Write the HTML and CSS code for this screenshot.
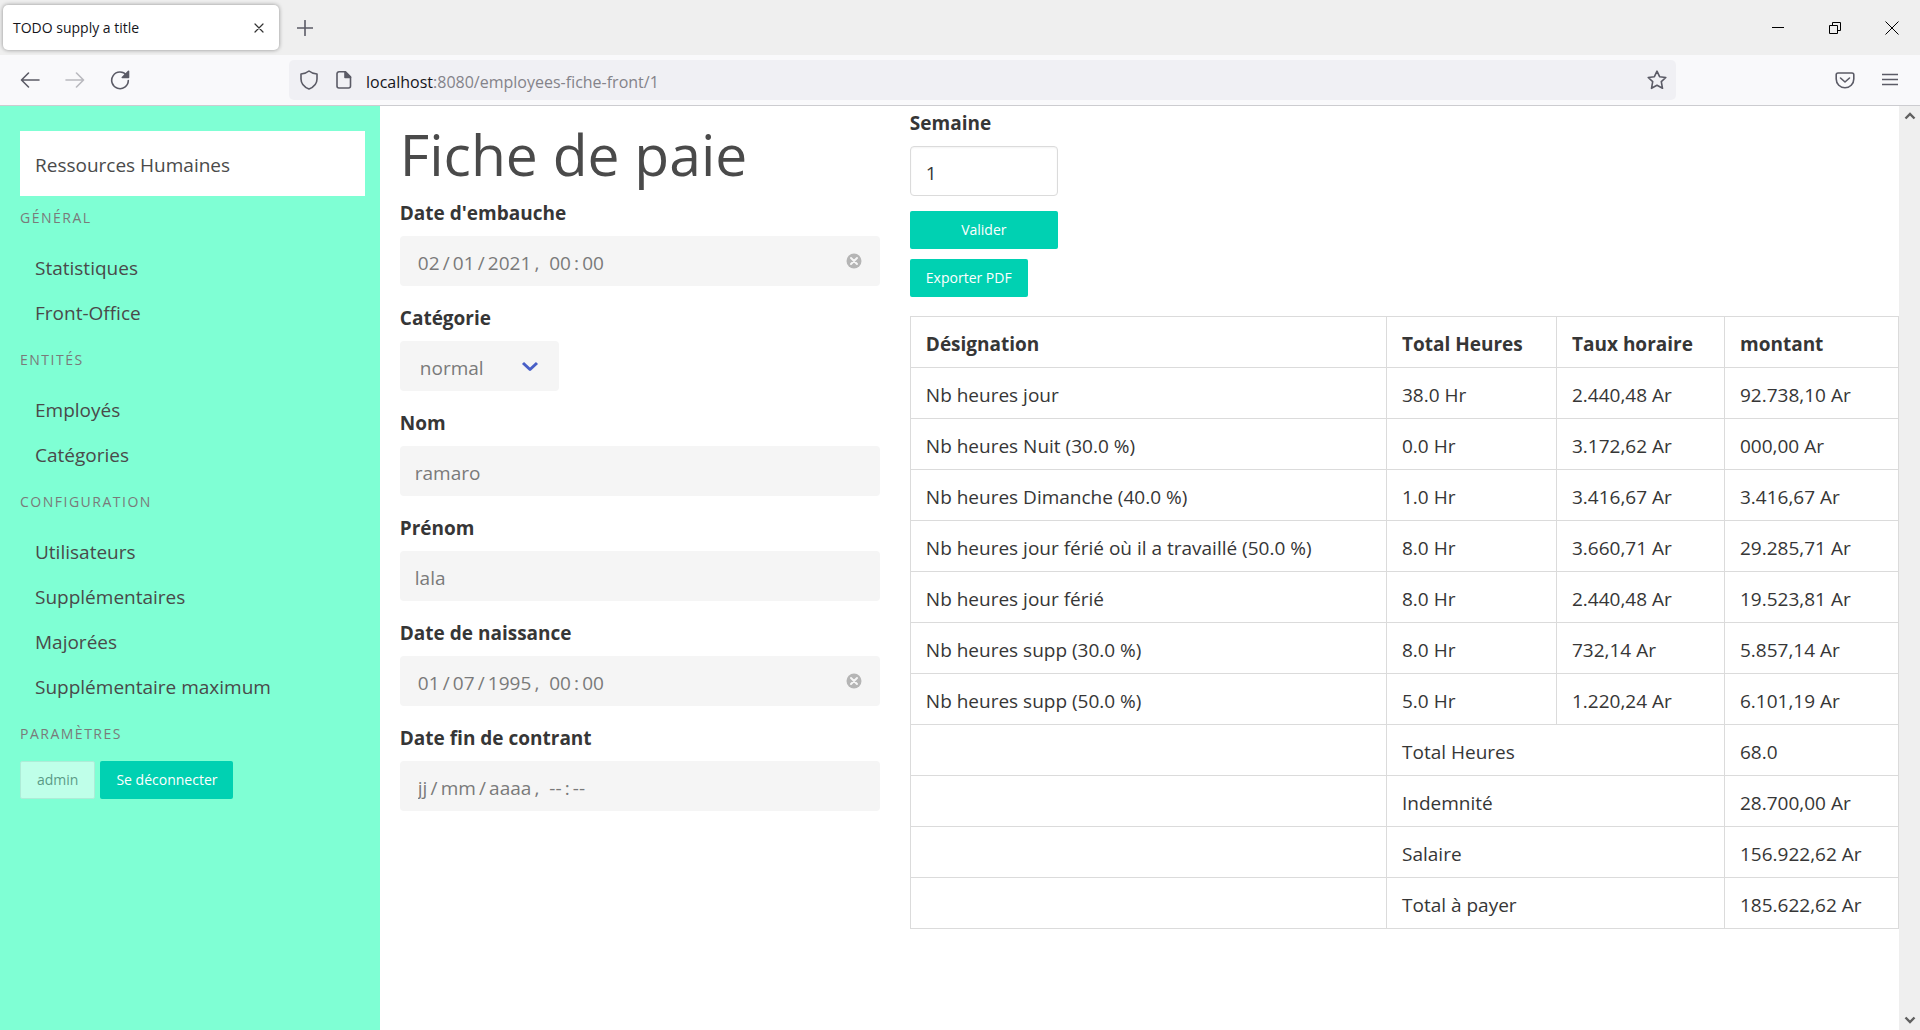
FILE: index.html
```html
<!DOCTYPE html>
<html lang="fr">
<head>
<meta charset="utf-8">
<title>TODO supply a title</title>
<link rel="stylesheet" href="styles.css">
</head>
<body>
<div class="window">
  <header class="tab-bar">
    <div class="tab">
      <span class="tab-title">TODO supply a title</span>
      <button class="icon-button tab-close" type="button" aria-label="Fermer l'onglet"><svg width="10" height="10" viewBox="0 0 10 10"><path d="M1 1l8 8M9 1l-8 8"/></svg></button>
    </div>
    <button class="icon-button new-tab" type="button" aria-label="Nouvel onglet"><svg width="16" height="16" viewBox="0 0 16 16"><path d="M8 .5v15M.5 8h15"/></svg></button>
    <div class="window-controls">
      <button class="icon-button window-control" type="button" aria-label="Réduire"><svg width="14" height="14" viewBox="0 0 14 14"><path d="M1 6.500h12"/></svg></button>
      <button class="icon-button window-control" type="button" aria-label="Restaurer"><svg width="14" height="14" viewBox="0 0 14 14"><path d="M1.500 4.500h8v8h-8zM4.500 4.500v-3h8v8h-3"/></svg></button>
      <button class="icon-button window-control" type="button" aria-label="Fermer"><svg width="14" height="14" viewBox="0 0 14 14"><path d="M.5.5l13 13M13.500.5l-13 13"/></svg></button>
    </div>
  </header>

  <div class="nav-bar">
    <div class="nav-buttons">
      <button class="icon-button nav-button" type="button" aria-label="Précédent"><svg width="20" height="20" viewBox="0 0 20 20"><path d="M19 10H2M8.500 3L1.500 10l7 7"/></svg></button>
      <button class="icon-button nav-button" type="button" aria-label="Suivant" disabled><svg width="20" height="20" viewBox="0 0 20 20"><path d="M1 10h17M11.500 3l7 7-7 7"/></svg></button>
      <button class="icon-button nav-button" type="button" aria-label="Actualiser"><svg width="20" height="20" viewBox="0 0 20 20"><path d="M16.500 5.200A8.300 8.300 0 1 0 18.300 10.500"/><path class="filled" d="M18.500 1.300v6.200h-6.200z"/></svg></button>
    </div>
    <div class="address">
      <svg width="20" height="20" viewBox="0 0 20 20"><path d="M10 1C8 2.800 5 3.700 2 4v5c0 4.500 3 8 8 10 5-2 8-5.500 8-10V4c-3-.3-6-1.200-8-3z"/></svg>
      <svg class="address-page" width="20" height="20" viewBox="0 0 20 20"><path d="M5 1.800h6.500l5 5V16a2 2 0 0 1-2 2H5a2 2 0 0 1-2-2V3.800a2 2 0 0 1 2-2z"/><path class="filled" d="M11 2v5.500h5.500z"/></svg>
      <span class="address-text"><b class="address-host">localhost</b>:8080/employees-fiche-front/1</span>
      <svg width="20" height="20" viewBox="0 0 20 20"><path d="M10 1.200l2.600 5.500 6.200.8-4.500 4.200 1.200 6.600-5.500-3.100-5.500 3.100 1.200-6.600L1.200 7.500l6.200-.8z"/></svg>
    </div>
    <div class="nav-tools">
      <button class="icon-button nav-button" type="button" aria-label="Pocket"><svg width="20" height="20" viewBox="0 0 20 20"><path d="M3 3h14a1.800 1.800 0 0 1 1.800 1.800V9A8.800 8.800 0 0 1 1.200 9V4.800A1.800 1.800 0 0 1 3 3z"/><path d="M5.500 8L10 12l4.500-4"/></svg></button>
      <button class="icon-button nav-button" type="button" aria-label="Menu"><svg width="16" height="20" viewBox="0 0 16 20"><path d="M.5 4.500h15M.5 9.500h15M.5 14.500h15"/></svg></button>
    </div>
  </div>

  <div class="viewport">
    <div class="page">
      <aside class="sidebar">
        <a class="brand" href="#">Ressources Humaines</a>
        <nav class="menu">
          <p class="menu-label">Général</p>
          <ul class="menu-list">
            <li><a href="#">Statistiques</a></li>
            <li><a href="#">Front-Office</a></li>
          </ul>
          <p class="menu-label">Entités</p>
          <ul class="menu-list">
            <li><a href="#">Employés</a></li>
            <li><a href="#">Catégories</a></li>
          </ul>
          <p class="menu-label">Configuration</p>
          <ul class="menu-list">
            <li><a href="#">Utilisateurs</a></li>
            <li><a href="#">Supplémentaires</a></li>
            <li><a href="#">Majorées</a></li>
            <li><a href="#">Supplémentaire maximum</a></li>
          </ul>
          <p class="menu-label">Paramètres</p>
        </nav>
        <div class="session">
          <button class="button button-light" type="button" disabled>admin</button>
          <button class="button" type="button">Se déconnecter</button>
        </div>
      </aside>

      <main class="content">
        <form class="employee">
          <h1 class="title">Fiche de paie</h1>
          <div class="field">
            <label class="label" for="embauche">Date d'embauche</label>
            <div class="control">
              <input class="input input-date" id="embauche" type="text" value="02&#8201;/&#8201;01&#8201;/&#8201;2021&#8201;,&nbsp; 00&#8201;:&#8201;00" readonly>
              <button class="icon-button clear" type="button" aria-label="Effacer"><svg width="16" height="16" viewBox="0 0 16 16"><circle cx="8" cy="8" r="7.500"/><path d="M5 5l6 6M11 5l-6 6"/></svg></button>
            </div>
          </div>
          <div class="field">
            <label class="label" for="categorie">Catégorie</label>
            <div class="control control-select">
              <select class="input select" id="categorie"><option>normal</option></select>
              <svg class="chevron" width="18" height="12" viewBox="0 0 18 12"><path d="M2 2l7 6.500L16 2"/></svg>
            </div>
          </div>
          <div class="field">
            <label class="label" for="nom">Nom</label>
            <input class="input" id="nom" type="text" value="ramaro" readonly>
          </div>
          <div class="field">
            <label class="label" for="prenom">Prénom</label>
            <input class="input" id="prenom" type="text" value="lala" readonly>
          </div>
          <div class="field">
            <label class="label" for="naissance">Date de naissance</label>
            <div class="control">
              <input class="input input-date" id="naissance" type="text" value="01&#8201;/&#8201;07&#8201;/&#8201;1995&#8201;,&nbsp; 00&#8201;:&#8201;00" readonly>
              <button class="icon-button clear" type="button" aria-label="Effacer"><svg width="16" height="16" viewBox="0 0 16 16"><circle cx="8" cy="8" r="7.500"/><path d="M5 5l6 6M11 5l-6 6"/></svg></button>
            </div>
          </div>
          <div class="field">
            <label class="label" for="fin">Date fin de contrant</label>
            <input class="input input-date" id="fin" type="text" placeholder="jj&#8201;/&#8201;mm&#8201;/&#8201;aaaa&#8201;,&nbsp; --&#8201;:&#8201;--" readonly>
          </div>
        </form>

        <section class="payslip">
          <form class="week">
            <label class="label" for="semaine">Semaine</label>
            <input class="input input-week" id="semaine" type="text" inputmode="numeric" value="1">
            <button class="button" type="button">Valider</button>
          </form>
          <button class="button" type="button">Exporter PDF</button>
          <table class="table">
            <colgroup><col><col class="col-hours"><col class="col-rate"><col class="col-amount"></colgroup>
            <thead>
              <tr><th>Désignation</th><th>Total Heures</th><th>Taux horaire</th><th>montant</th></tr>
            </thead>
            <tbody>
              <tr><td>Nb heures jour</td><td>38.0 Hr</td><td>2.440,48 Ar</td><td>92.738,10 Ar</td></tr>
              <tr><td>Nb heures Nuit (30.0 %)</td><td>0.0 Hr</td><td>3.172,62 Ar</td><td>000,00 Ar</td></tr>
              <tr><td>Nb heures Dimanche (40.0 %)</td><td>1.0 Hr</td><td>3.416,67 Ar</td><td>3.416,67 Ar</td></tr>
              <tr><td>Nb heures jour férié où il a travaillé (50.0 %)</td><td>8.0 Hr</td><td>3.660,71 Ar</td><td>29.285,71 Ar</td></tr>
              <tr><td>Nb heures jour férié</td><td>8.0 Hr</td><td>2.440,48 Ar</td><td>19.523,81 Ar</td></tr>
              <tr><td>Nb heures supp (30.0 %)</td><td>8.0 Hr</td><td>732,14 Ar</td><td>5.857,14 Ar</td></tr>
              <tr><td>Nb heures supp (50.0 %)</td><td>5.0 Hr</td><td>1.220,24 Ar</td><td>6.101,19 Ar</td></tr>
              <tr><td></td><td colspan="2">Total Heures</td><td>68.0</td></tr>
              <tr><td></td><td colspan="2">Indemnité</td><td>28.700,00 Ar</td></tr>
              <tr><td></td><td colspan="2">Salaire</td><td>156.922,62 Ar</td></tr>
              <tr><td></td><td colspan="2">Total à payer</td><td>185.622,62 Ar</td></tr>
            </tbody>
          </table>
        </section>
      </main>
    </div>

    <div class="scroll-track">
      <svg width="12" height="10" viewBox="0 0 12 10"><path d="M1.500 7.500L6 3l4.500 4.500"/></svg>
      <svg width="12" height="10" viewBox="0 0 12 10"><path d="M1.500 2.500L6 7l4.500-4.500"/></svg>
    </div>
  </div>
</div>
</body>
</html>
```
FILE: styles.css
```css
* {
  box-sizing: border-box;
}

body {
  margin: 0;
  color: #363636;
  background: #fff;
  font: 19px/30px "Open Sans", "Noto Sans", sans-serif;
}

button,
input,
select {
  font: inherit;
  margin: 0;
}

svg {
  display: block;
  flex: none;
  fill: none;
  stroke: #5b5b66;
  stroke-width: 1.6;
  stroke-linecap: round;
  stroke-linejoin: round;
}

.filled {
  fill: #5b5b66;
}

.icon-button {
  display: flex;
  align-items: center;
  justify-content: center;
  padding: 0;
  border: 0;
  background: none;
}

.window {
  display: flex;
  flex-direction: column;
  min-height: 100vh;
}

/* Browser frame */

.tab-bar {
  display: flex;
  align-items: center;
  height: 55px;
  padding-left: 3px;
  background: #efefef;
}

.tab {
  display: flex;
  align-items: center;
  width: 276px;
  height: 45px;
  padding: 0 10px;
  border-radius: 5px;
  background: #fff;
  box-shadow: 0 0 4px rgba(0, 0, 0, 0.4);
}

.tab-title {
  flex: 1;
  color: #15141a;
  font-size: 14px;
}

.tab-close {
  width: 20px;
  height: 20px;
}

.tab-close svg {
  stroke: #333;
  stroke-width: 1.2;
}

.new-tab {
  width: 52px;
  height: 45px;
}

.window-controls {
  display: flex;
  margin-left: auto;
}

.window-control {
  width: 57px;
  height: 55px;
}

.window-control svg {
  stroke: #000;
  stroke-width: 1;
  stroke-linecap: butt;
  stroke-linejoin: miter;
}

.nav-bar {
  display: flex;
  align-items: center;
  height: 51px;
  border-bottom: 1px solid #ccccd0;
  background: #f9f9fb;
}

.nav-buttons {
  display: flex;
  width: 289px;
  padding-left: 7px;
}

.nav-button {
  width: 45px;
  height: 40px;
}

.nav-button:disabled {
  opacity: 0.4;
}

.address {
  display: flex;
  flex: 1;
  align-items: center;
  height: 40px;
  padding: 0 9px 0 10px;
  border-radius: 5px;
  background: #f0f0f4;
}

.address-page {
  margin: 0 12px 0 15px;
}

.address-text {
  flex: 1;
  padding-top: 3px;
  color: #84838a;
  font-size: 16px;
}

.address-host {
  color: #15141a;
  font-weight: 400;
}

.nav-tools {
  display: flex;
  width: 244px;
  padding-right: 8px;
  justify-content: flex-end;
}

.viewport {
  display: flex;
  flex: 1;
}

.scroll-track {
  display: flex;
  flex-direction: column;
  flex: none;
  align-items: center;
  justify-content: space-between;
  width: 21px;
  padding: 5px 0;
  background: #efefef;
}

.scroll-track svg {
  stroke: #606060;
  stroke-width: 2.4;
  stroke-linecap: butt;
  stroke-linejoin: miter;
}

.page {
  display: flex;
  flex: 1;
}

/* Sidebar */

.sidebar {
  flex: none;
  width: 20%;
  padding: 25px 15px 20px 20px;
  background: #7fffd4;
}

.brand {
  display: block;
  padding: 19px 15px 16px;
  color: #4a4a4a;
  background: #fff;
  text-decoration: none;
}

.menu {
  padding-top: 12px;
}

.menu-label {
  margin: 0 0 17px;
  color: #7a7a7a;
  font-size: 14px;
  line-height: 20px;
  letter-spacing: 1.5px;
  text-transform: uppercase;
}

.menu-list {
  margin: 0 0 15px;
  padding: 0;
  list-style: none;
}

.menu-list a {
  display: block;
  padding: 8px 15px 7px;
  color: #4a4a4a;
  text-decoration: none;
}

.session {
  display: flex;
  gap: 5px;
}

/* Controls */

.button {
  height: 38px;
  padding: 0 16px;
  border: 0;
  border-radius: 2px;
  color: #fff;
  background: #00d1b2;
  font-size: 14px;
  line-height: 20px;
}

.button-light {
  border: 1px solid #dbdbdb;
  color: #363636;
  background: #fff;
  opacity: 0.5;
}

.label {
  display: block;
  margin-bottom: 8px;
  padding-top: 2px;
  font-weight: 700;
}

.input {
  display: block;
  width: 100%;
  height: 50px;
  padding: 3px 15px 0;
  border: 0;
  border-radius: 4px;
  outline: 0;
  color: #7a7a7a;
  background: #f5f5f5;
}

.input::placeholder {
  color: #7a7a7a;
  opacity: 1;
}

.input-date {
  padding-left: 18px;
}

.control {
  position: relative;
}

.clear {
  position: absolute;
  top: 17px;
  right: 18px;
}

.clear svg {
  fill: #b5b5b5;
  stroke: none;
}

.clear path {
  stroke: #f5f5f5;
  stroke-width: 2;
}

.control-select {
  width: 159px;
}

.select {
  padding-left: 20px;
  appearance: none;
}

.chevron {
  position: absolute;
  top: 20px;
  right: 20px;
  stroke: #485fc7;
  stroke-width: 3;
  stroke-linecap: butt;
  pointer-events: none;
}

/* Payslip page */

.content {
  display: grid;
  flex: 1;
  grid-template-columns: 33fr 68fr;
  gap: 30px;
  align-items: start;
  padding-left: 20px;
}

.title {
  margin: 0;
  padding: 14px 0 8px;
  color: #4a4a4a;
  font-size: 57px;
  font-weight: 400;
  line-height: 68px;
}

.field {
  margin-bottom: 15px;
}

.week {
  display: flex;
  flex-direction: column;
  width: 148px;
  margin-bottom: 10px;
}

.input-week {
  margin-bottom: 15px;
  border: 1px solid #dbdbdb;
  color: #363636;
  background: #fff;
  box-shadow: inset 0 1px 2px rgba(10, 10, 10, 0.05);
}

.table {
  width: 100%;
  margin: 19px 0 30px;
  border-collapse: collapse;
  table-layout: fixed;
}

.col-hours {
  width: 170px;
}

.col-rate {
  width: 168px;
}

.col-amount {
  width: 174px;
}

.table th,
.table td {
  height: 51px;
  padding: 12px 15px 8px;
  border: 1px solid #dbdbdb;
  text-align: left;
}
```
